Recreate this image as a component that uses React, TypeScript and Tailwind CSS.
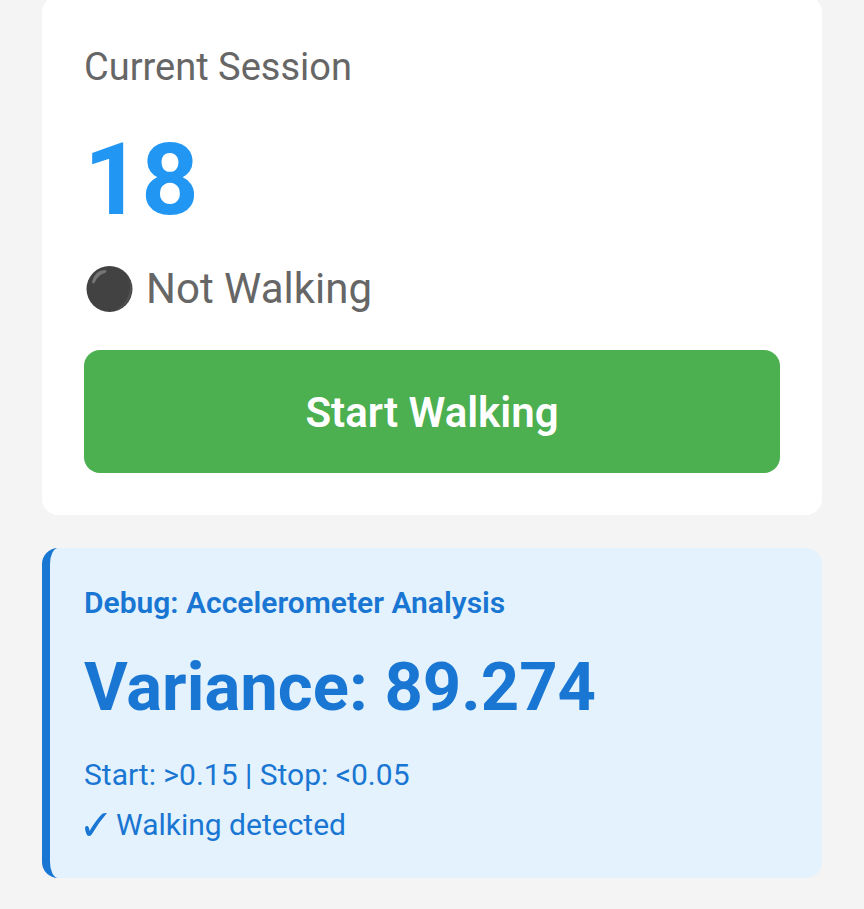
export default function App() {
  return (
    <main className="flow-root min-h-screen overflow-hidden bg-[#f4f4f4] px-[42px] pb-8 font-['Roboto','Liberation_Sans',sans-serif]">
      <section className="-mt-1 rounded-[16px] bg-white px-[42px] pt-[46px] pb-[42px]">
        <h2 className="text-[38px] leading-[50px] text-[#666666]">Current Session</h2>
        <p className="mt-[30px] text-[100px] leading-[116px] font-bold text-[#2196f3]">18</p>
        <p className="mt-6 flex items-center gap-3 text-[42px] leading-[54px] text-[#666666]">
          <svg viewBox="0 0 50 50" className="size-[50px]" aria-hidden="true">
            <circle cx="25.5" cy="25" r="23" fill="#424242" />
            <path d="M44 12 A23 23 0 0 1 30 47 A27 27 0 0 0 44 12Z" fill="#515151" />
            <path d="M8 18 Q11 6 21 6 Q24 7 21 9 Q14 11 11 18 Q9 21 8 18Z" fill="#757575" />
          </svg>
          Not Walking
        </p>
        <button type="button" className="mt-[34px] h-[123px] w-full rounded-[16px] bg-[#4caf50] pt-[2px] text-[42px] font-semibold text-white">
          Start Walking
        </button>
      </section>
      <section className="mt-[33px] rounded-[16px] border-l-[8px] border-[#1976d2] bg-[#e3f2fd] px-[34px] pt-9 pb-7 text-[#1976d2]">
        <h3 className="text-[30px] leading-[38px] font-semibold">Debug: Accelerometer Analysis</h3>
        <p className="mt-6 text-[67px] leading-[82px] font-bold">Variance: 89.274</p>
        <p className="mt-[22px] text-[30px] leading-[50px]">Start: &gt;0.15 | Stop: &lt;0.05</p>
        <p className="flex items-center gap-2 text-[30px] leading-[50px]">
          <svg viewBox="0 0 24 28" className="h-7 w-6" aria-hidden="true">
            <path d="M1 17 Q1 15 3 15 Q5 15 5.5 20 Q12 9 18 3 Q19 2 23 2 Q15 11 8 23 Q7 25 5 25 Q3 25 2.5 23 Q1 19 1 17Z" fill="currentColor" />
          </svg>
          Walking detected
        </p>
      </section>
    </main>
  );
}
